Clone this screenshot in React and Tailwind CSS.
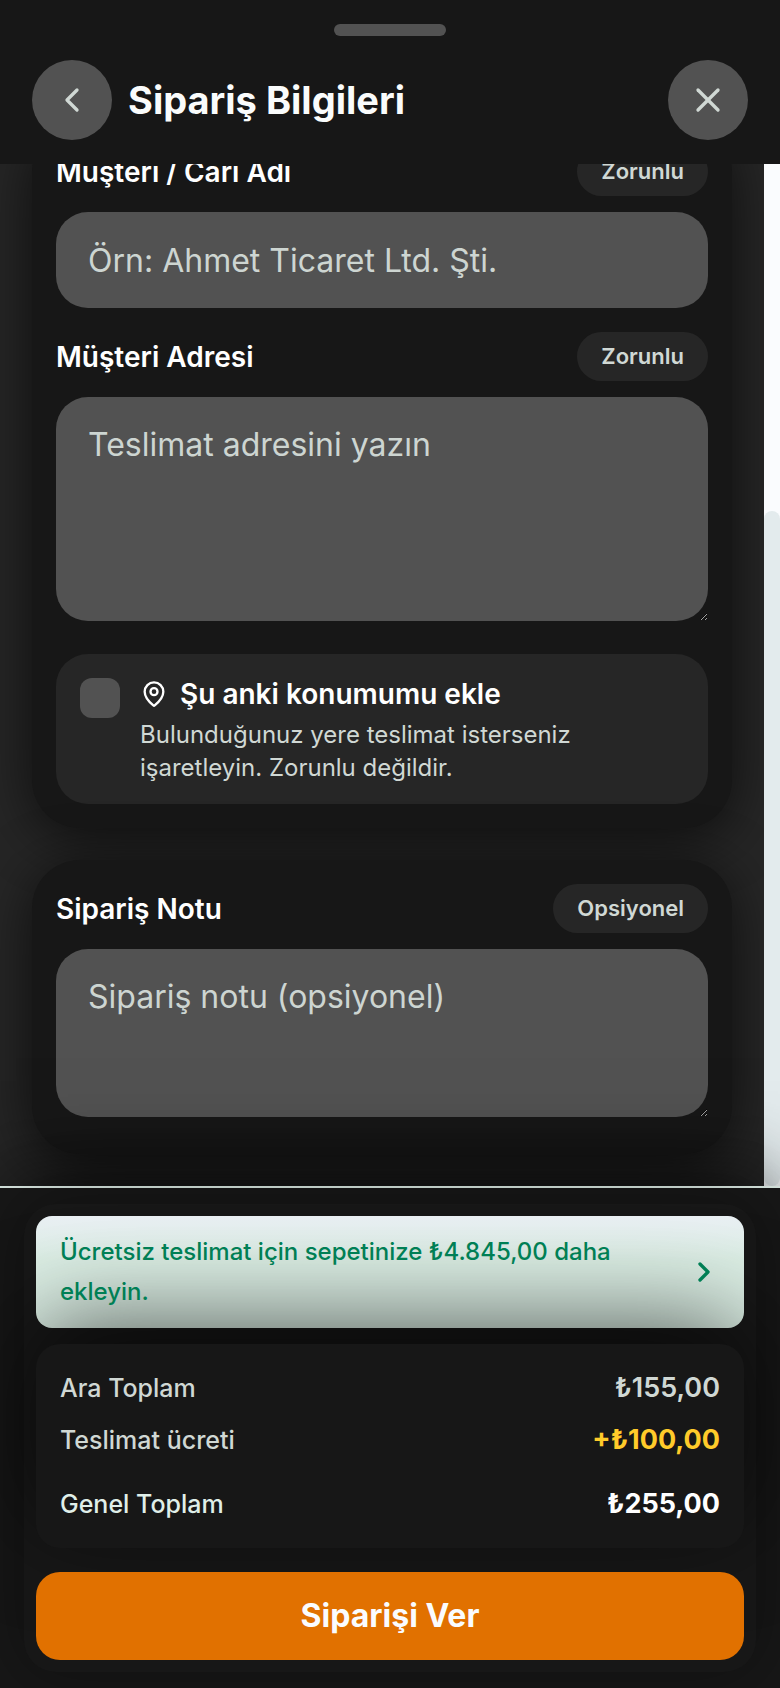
import React, { useState } from 'react';
import { ChevronLeft, ChevronRight, MapPin, X } from 'lucide-react';

const fieldClass =
  'block w-full rounded-[32px] bg-neutral-600 px-8 text-[32px] leading-[48px] text-white placeholder-[#cdd5d1] outline-none';

function Card({ children }) {
  return (
    <section className="rounded-[48px] bg-neutral-900 p-6 shadow-[0_8px_56px_rgba(0,0,0,0.65)]">
      {children}
    </section>
  );
}

function FieldHeader({ id, label, badge }) {
  return (
    <div className="mb-4 flex items-center justify-between">
      <label htmlFor={id} className="text-[28px] leading-[40px] font-semibold text-white">
        {label}
      </label>
      <span className="rounded-full bg-neutral-800 px-6 py-2 text-[22px] leading-[33px] font-semibold text-[#d0d8d4]">
        {badge}
      </span>
    </div>
  );
}

function RoundButton({ label, children }) {
  return (
    <button
      type="button"
      aria-label={label}
      className="flex size-20 shrink-0 items-center justify-center rounded-full bg-neutral-600 text-[#d0d8d4]"
    >
      {children}
    </button>
  );
}

export default function App() {
  const [useLocation, setUseLocation] = useState(false);

  return (
    <div className="flex min-h-screen flex-col overflow-hidden bg-neutral-900 font-['Inter',sans-serif]">
      <header className="relative z-20 bg-neutral-900 px-8 pt-6 pb-6">
        <div className="mx-auto mb-6 h-3 w-28 rounded-full bg-neutral-600"></div>
        <div className="flex items-center gap-4">
          <RoundButton label="Geri">
            <ChevronLeft className="size-10" />
          </RoundButton>
          <h1 className="flex-1 text-[38px] leading-[48px] font-bold text-[#fafcfc]">
            Sipariş Bilgileri
          </h1>
          <RoundButton label="Kapat">
            <X className="size-10" />
          </RoundButton>
        </div>
      </header>

      <main className="flex flex-1 overflow-hidden bg-neutral-800">
        <div className="-mt-[41px] flex flex-1 flex-col gap-8 px-8 pb-8">
          <Card>
            <div className="mb-6">
              <FieldHeader id="customer" label="Müşteri / Cari Adı" badge="Zorunlu" />
              <input
                id="customer"
                type="text"
                placeholder="Örn: Ahmet Ticaret Ltd. Şti."
                className={`${fieldClass} h-24`}
              />
            </div>

            <div className="pb-[13px]">
              <FieldHeader id="address" label="Müşteri Adresi" badge="Zorunlu" />
              <textarea
                id="address"
                placeholder="Teslimat adresini yazın"
                className={`${fieldClass} h-56 resize-y py-6`}
              />
            </div>

            <label className="mt-5 flex gap-5 rounded-[32px] bg-neutral-800 px-6 py-5">
              <input
                type="checkbox"
                checked={useLocation}
                onChange={(e) => setUseLocation(e.target.checked)}
                className="mt-1 size-10 shrink-0 appearance-none rounded-xl bg-neutral-600 checked:bg-[#e17100]"
              />
              <span>
                <span className="flex items-center gap-3 text-[28px] leading-[40px] font-semibold text-white">
                  <MapPin className="size-7" />
                  Şu anki konumumu ekle
                </span>
                <span className="mt-1 block max-w-[480px] text-[24px] leading-[33px] text-[#d0d8d4]">
                  Bulunduğunuz yere teslimat isterseniz işaretleyin. Zorunlu değildir.
                </span>
              </span>
            </label>
          </Card>

          <Card>
            <div className="pb-[13px]">
              <FieldHeader id="note" label="Sipariş Notu" badge="Opsiyonel" />
              <textarea
                id="note"
                placeholder="Sipariş notu (opsiyonel)"
                className={`${fieldClass} h-42 resize-y py-6`}
              />
            </div>
          </Card>
        </div>

        {/* scroll track */}
        <div className="flex w-4 shrink-0 flex-col justify-end bg-[#fafcfe]">
          <div className="h-[66%] rounded-full bg-[#e3ebed]"></div>
        </div>
      </main>

      <footer className="relative z-10 border-t-2 border-[#d4e2dc] bg-neutral-900 px-6 py-4 shadow-[0_-24px_80px_-16px_rgba(0,0,0,0.75)]">
        <div className="rounded-[32px] bg-neutral-900 p-3 shadow-[0_0_64px_rgba(0,0,0,0.35)]">
          <button
            type="button"
            className="flex w-full items-center justify-between gap-6 rounded-2xl bg-gradient-to-b from-[#eaf0f4] to-[#dcefe5] to-40% px-6 py-4 text-left text-[#007f55]"
          >
            <span className="max-w-[560px] text-[24px] leading-[40px] font-medium">
              Ücretsiz teslimat için sepetinize ₺4.845,00 daha ekleyin.
            </span>
            <ChevronRight className="size-8 shrink-0" strokeWidth={2.5} />
          </button>

          <dl className="mt-4 rounded-3xl bg-neutral-900 p-6 text-[25px] leading-[40px] font-medium text-[#d0d8d4] shadow-[0_-24px_96px_rgba(0,0,0,0.6)]">
            <div className="flex items-center justify-between">
              <dt>Ara Toplam</dt>
              <dd className="text-[27px] font-semibold">₺155,00</dd>
            </div>
            <div className="mt-3 flex items-center justify-between">
              <dt>Teslimat ücreti</dt>
              <dd className="text-[27px] font-bold text-[#ffcb2a]">+₺100,00</dd>
            </div>
            <div className="mt-6 flex items-center justify-between text-[#e0efe9]">
              <dt>Genel Toplam</dt>
              <dd className="text-[27px] font-bold text-white">₺255,00</dd>
            </div>
          </dl>

          <button
            type="button"
            className="relative mt-6 h-22 w-full rounded-3xl bg-[#e17100] text-[32px] leading-[48px] font-bold text-[#fafcfe]"
          >
            Siparişi Ver
          </button>
        </div>
      </footer>
    </div>
  );
}
